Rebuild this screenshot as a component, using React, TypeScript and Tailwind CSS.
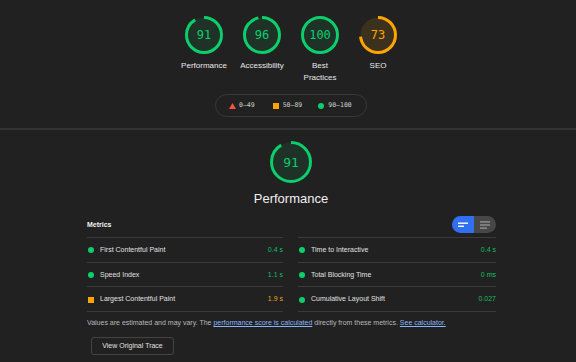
import React from "react";

const GREEN = "#0cce6b";
const ORANGE = "#ffa400";

function Gauge({
  score,
  size,
  stroke,
  color,
  fill,
  textClass,
}: {
  score: number;
  size: number;
  stroke: number;
  color: string;
  fill: string;
  textClass: string;
}) {
  const r = (size - stroke) / 2;
  const c = 2 * Math.PI * r;
  const len = (score / 100) * c;
  return (
    <div className="relative flex items-center justify-center" style={{ width: size, height: size }}>
      <svg width={size} height={size} className="absolute inset-0 -rotate-90">
        <circle cx={size / 2} cy={size / 2} r={r} fill={fill} stroke="none" />
        <circle
          cx={size / 2}
          cy={size / 2}
          r={r}
          fill="none"
          stroke={color}
          strokeWidth={stroke}
          strokeDasharray={`${len} ${c}`}
        />
      </svg>
      <span className={textClass} style={{ color }}>
        {score}
      </span>
    </div>
  );
}

const gauges = [
  { score: 91, label: "Performance", color: GREEN, fill: "rgba(12,206,107,0.1)" },
  { score: 96, label: "Accessibility", color: GREEN, fill: "rgba(12,206,107,0.1)" },
  { score: 100, label: "Best Practices", color: GREEN, fill: "rgba(12,206,107,0.1)" },
  { score: 73, label: "SEO", color: ORANGE, fill: "rgba(255,164,0,0.12)" },
];

type Metric = { name: string; value: string; status: "pass" | "avg" };

const left: Metric[] = [
  { name: "First Contentful Paint", value: "0.4 s", status: "pass" },
  { name: "Speed Index", value: "1.1 s", status: "pass" },
  { name: "Largest Contentful Paint", value: "1.9 s", status: "avg" },
];
const right: Metric[] = [
  { name: "Time to Interactive", value: "0.4 s", status: "pass" },
  { name: "Total Blocking Time", value: "0 ms", status: "pass" },
  { name: "Cumulative Layout Shift", value: "0.027", status: "pass" },
];

function MetricRow({ m }: { m: Metric }) {
  return (
    <div className="flex h-[24.7px] items-center border-t border-[#3a3a3a] pt-[1px]">
      {m.status === "pass" ? (
        <span className="ml-[1px] h-[6px] w-[6px] rounded-full bg-[#0cce6b]" />
      ) : (
        <span className="ml-[1px] h-[6px] w-[6px] bg-[#ffa400]" />
      )}
      <span className="ml-[6px] flex-1 text-[7px] text-[#e0e0e0]">{m.name}</span>
      <span className={`text-[7px] ${m.status === "pass" ? "text-[#18bd66]" : "text-[#eba21c]"}`}>{m.value}</span>
    </div>
  );
}

export default function App() {
  return (
    <div
      className="h-[362px] w-[576px] overflow-hidden bg-[#212121] text-[#e0e0e0]"
      style={{ fontFamily: '"Liberation Sans", Arial, sans-serif' }}
    >
      <div className="pl-[6px]">
        {/* top gauges */}
        <div className="flex justify-center pt-[16px]">
          {gauges.map((g) => (
            <div key={g.label} className="flex w-[58px] flex-col items-center">
              <Gauge
                score={g.score}
                size={38}
                stroke={3}
                color={g.color}
                fill={g.fill}
                textClass="relative text-[12px] leading-none [font-family:'DejaVu_Sans_Mono',monospace]"
              />
              <div className="mt-[6px] w-[50px] text-center text-[8px] leading-[12px] text-[#e8e8e8]">{g.label}</div>
            </div>
          ))}
        </div>

        {/* legend */}
        <div className="mt-[10px] flex justify-center">
          <div className="flex h-[23px] w-[152px] items-center rounded-full border border-[#383838] pl-[13px] text-[6.5px] text-[#d0d0d0] [font-family:'DejaVu_Sans_Mono',monospace]">
            <svg width="7" height="6" viewBox="0 0 7 6" className="mr-[3px]">
              <polygon points="3.5,0 7,6 0,6" fill="#ff4e42" />
            </svg>
            <span>0–49</span>
            <span className="ml-[18px] mr-[4px] h-[6px] w-[6px] bg-[#ffa400]" />
            <span>50–89</span>
            <span className="ml-[16px] mr-[4px] h-[6px] w-[6px] rounded-full bg-[#0cce6b]" />
            <span>90–100</span>
          </div>
        </div>
      </div>

      <div className="mt-[11px] h-[2px] bg-[#333333]" />

      <div className="pl-[6px]">
        {/* big gauge */}
        <div className="mt-[11px] flex flex-col items-center">
          <Gauge
            score={91}
            size={42}
            stroke={3}
            color={GREEN}
            fill="rgba(12,206,107,0.1)"
            textClass="relative text-[13px] leading-none [font-family:'DejaVu_Sans_Mono',monospace]"
          />
          <div className="mt-[8px] text-[13px] leading-[16px] text-[#f0f0f0]">Performance</div>
        </div>
      </div>

      <div className="ml-[87px] w-[409px]">
        <div className="mt-[9px] flex h-[21px] items-center justify-between">
          <span className="pb-[3px] text-[7px] font-bold text-[#f0f0f0]">Metrics</span>
          <div className="mb-[4px] flex h-[17px] w-[44px] overflow-hidden rounded-full">
            <div className="flex flex-1 items-center justify-center bg-[#2f6ff0]">
              <svg width="10" height="6" viewBox="0 0 10 6">
                <rect x="0" y="0.5" width="10" height="1.4" fill="#fff" />
                <rect x="0" y="3.6" width="6" height="1.4" fill="#fff" />
              </svg>
            </div>
            <div className="flex flex-1 items-center justify-center bg-[#474747]">
              <svg width="10" height="8" viewBox="0 0 10 8">
                <rect x="0" y="0.3" width="10" height="1.2" fill="#9e9e9e" />
                <rect x="0" y="3.4" width="10" height="1.2" fill="#9e9e9e" />
                <rect x="0" y="6.5" width="7" height="1.2" fill="#9e9e9e" />
              </svg>
            </div>
          </div>
        </div>
        <div className="flex gap-[15px]">
          <div className="w-[196px]">
            {left.map((m) => (
              <MetricRow key={m.name} m={m} />
            ))}
            <div className="border-t border-[#3a3a3a]" />
          </div>
          <div className="w-[198px]">
            {right.map((m) => (
              <MetricRow key={m.name} m={m} />
            ))}
            <div className="border-t border-[#3a3a3a]" />
          </div>
        </div>
        <div className="mt-[6px] text-[7px] leading-[10px] text-[#b8b8b8]">
          Values are estimated and may vary. The{" "}
          <span className="text-[#8ab4f8] underline">performance score is calculated</span> directly from these
          metrics. <span className="text-[#8ab4f8] underline">See calculator.</span>
        </div>
        <div className="ml-[4px] mt-[9px] flex h-[18px] w-[83px] items-center justify-center rounded-[3px] border border-[#444444] text-[7px] text-[#e0e0e0]">
          View Original Trace
        </div>
      </div>
    </div>
  );
}
